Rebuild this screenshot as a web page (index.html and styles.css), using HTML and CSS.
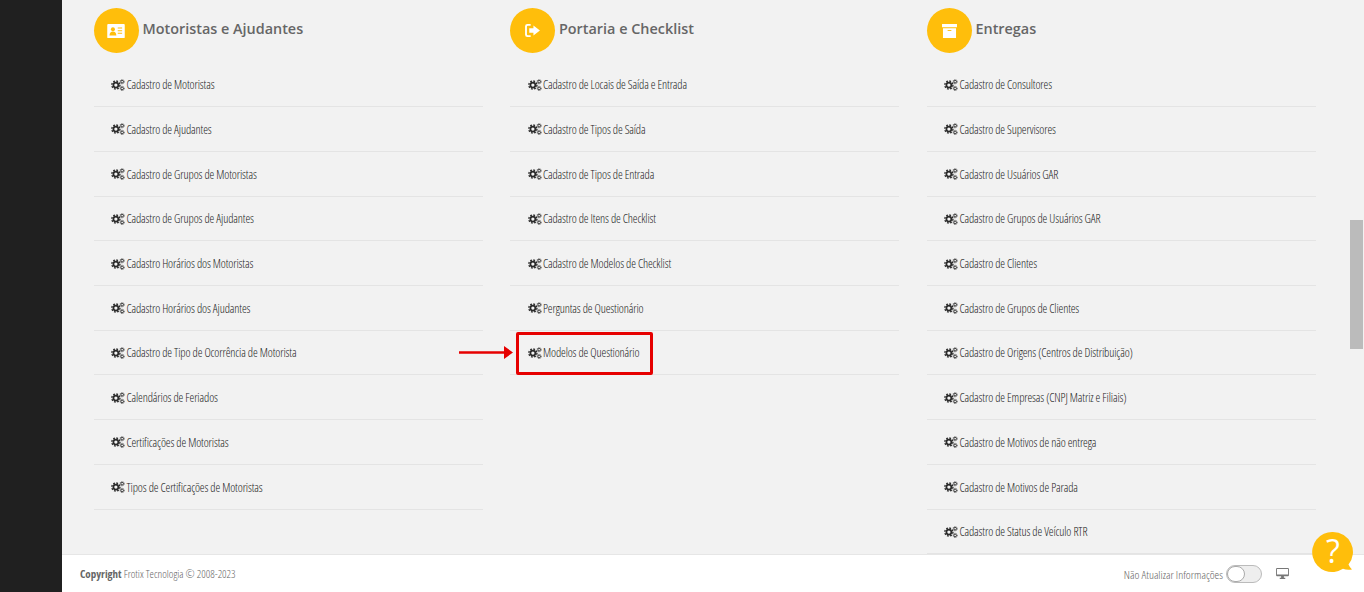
FILE: index.html
```html
<!DOCTYPE html>
<html lang="pt-BR">
<head>
<meta charset="utf-8">
<title>Frotix</title>
<link rel="stylesheet" href="styles.css">
</head>
<body>
<svg class="defs" width="0" height="0" aria-hidden="true">
  <symbol id="cogs" viewBox="0 0 15 13">
    <circle cx="5.200" cy="6.600" r="2.700" fill="none" stroke="#2a2a2a" stroke-width="1.900"/>
    <circle cx="5.200" cy="6.600" r="4.400" fill="none" stroke="#2a2a2a" stroke-width="1.500" stroke-dasharray="1.900 1.550"/>
    <circle cx="12" cy="2.900" r="1.400" fill="none" stroke="#2a2a2a" stroke-width="1"/>
    <circle cx="12" cy="2.900" r="2.300" fill="none" stroke="#2a2a2a" stroke-width=".8" stroke-dasharray="1 .8"/>
    <circle cx="12" cy="10.200" r="1.400" fill="none" stroke="#2a2a2a" stroke-width="1"/>
    <circle cx="12" cy="10.200" r="2.300" fill="none" stroke="#2a2a2a" stroke-width=".8" stroke-dasharray="1 .8"/>
  </symbol>
</svg>
<div class="app">
  <aside class="sidebar"></aside>
  <div class="main">
    <main class="content">
      <section class="col">
        <header class="head">
          <span class="badge">
            <svg width="18" height="14" viewBox="0 0 20 16"><path fill="#fff" d="M1 0h18a1 1 0 0 1 1 1v14a1 1 0 0 1-1 1H1a1 1 0 0 1-1-1V1a1 1 0 0 1 1-1z"/><circle cx="6.500" cy="6" r="2.300" fill="#ffbe0b"/><path fill="#ffbe0b" d="M2.600 13c0-3 1.600-4.400 3.900-4.400s3.900 1.400 3.900 4.400zM12 4h5v1.200h-5zM12 7h5v1.200h-5zM12 10h5v1.200h-5z"/></svg>
          </span>
          <h2 class="title">Motoristas e Ajudantes</h2>
        </header>
        <ul class="list">
          <li class="row"><svg class="cog"><use href="#cogs"/></svg><span class="label">Cadastro de Motoristas</span></li>
          <li class="row"><svg class="cog"><use href="#cogs"/></svg><span class="label">Cadastro de Ajudantes</span></li>
          <li class="row"><svg class="cog"><use href="#cogs"/></svg><span class="label">Cadastro de Grupos de Motoristas</span></li>
          <li class="row"><svg class="cog"><use href="#cogs"/></svg><span class="label">Cadastro de Grupos de Ajudantes</span></li>
          <li class="row"><svg class="cog"><use href="#cogs"/></svg><span class="label">Cadastro Horários dos Motoristas</span></li>
          <li class="row"><svg class="cog"><use href="#cogs"/></svg><span class="label">Cadastro Horários dos Ajudantes</span></li>
          <li class="row"><svg class="cog"><use href="#cogs"/></svg><span class="label">Cadastro de Tipo de Ocorrência de Motorista</span></li>
          <li class="row"><svg class="cog"><use href="#cogs"/></svg><span class="label">Calendários de Feriados</span></li>
          <li class="row"><svg class="cog"><use href="#cogs"/></svg><span class="label">Certificações de Motoristas</span></li>
          <li class="row"><svg class="cog"><use href="#cogs"/></svg><span class="label">Tipos de Certificações de Motoristas</span></li>
        </ul>
      </section>
      <section class="col">
        <header class="head">
          <span class="badge">
            <svg width="15" height="13" viewBox="0 0 16 14"><path fill="#fff" d="M2.500 0H6v2H3a1 1 0 0 0-1 1v8a1 1 0 0 0 1 1h3v2H2.500A2.500 2.500 0 0 1 0 11.500v-9A2.500 2.500 0 0 1 2.500 0zM9 1.500 16 7l-7 5.500V9.500H4.500v-5H9z"/></svg>
          </span>
          <h2 class="title">Portaria e Checklist</h2>
        </header>
        <ul class="list">
          <li class="row"><svg class="cog"><use href="#cogs"/></svg><span class="label">Cadastro de Locais de Saída e Entrada</span></li>
          <li class="row"><svg class="cog"><use href="#cogs"/></svg><span class="label">Cadastro de Tipos de Saída</span></li>
          <li class="row"><svg class="cog"><use href="#cogs"/></svg><span class="label">Cadastro de Tipos de Entrada</span></li>
          <li class="row"><svg class="cog"><use href="#cogs"/></svg><span class="label">Cadastro de Itens de Checklist</span></li>
          <li class="row"><svg class="cog"><use href="#cogs"/></svg><span class="label">Cadastro de Modelos de Checklist</span></li>
          <li class="row"><svg class="cog"><use href="#cogs"/></svg><span class="label">Perguntas de Questionário</span></li>
          <li class="row marked">
            <svg class="cog"><use href="#cogs"/></svg><span class="label">Modelos de Questionário</span>
            <span class="callout"></span>
            <svg class="arrow" width="54" height="13" viewBox="0 0 54 13"><path fill="#e60000" d="M0 5.200h45V0l9 6.500-9 6.500V7.800H0z"/></svg>
          </li>
        </ul>
      </section>
      <section class="col">
        <header class="head">
          <span class="badge">
            <svg width="15" height="14" viewBox="0 0 16 15"><path fill="#fff" d="M0 0h16v3.500H0zM1 4.500h14V15H1z"/><path fill="#ffbe0b" d="M6 6.500h4v1H6z"/></svg>
          </span>
          <h2 class="title">Entregas</h2>
        </header>
        <ul class="list">
          <li class="row"><svg class="cog"><use href="#cogs"/></svg><span class="label">Cadastro de Consultores</span></li>
          <li class="row"><svg class="cog"><use href="#cogs"/></svg><span class="label">Cadastro de Supervisores</span></li>
          <li class="row"><svg class="cog"><use href="#cogs"/></svg><span class="label">Cadastro de Usuários GAR</span></li>
          <li class="row"><svg class="cog"><use href="#cogs"/></svg><span class="label">Cadastro de Grupos de Usuários GAR</span></li>
          <li class="row"><svg class="cog"><use href="#cogs"/></svg><span class="label">Cadastro de Clientes</span></li>
          <li class="row"><svg class="cog"><use href="#cogs"/></svg><span class="label">Cadastro de Grupos de Clientes</span></li>
          <li class="row"><svg class="cog"><use href="#cogs"/></svg><span class="label">Cadastro de Origens (Centros de Distribuição)</span></li>
          <li class="row"><svg class="cog"><use href="#cogs"/></svg><span class="label">Cadastro de Empresas (CNPJ Matriz e Filiais)</span></li>
          <li class="row"><svg class="cog"><use href="#cogs"/></svg><span class="label">Cadastro de Motivos de não entrega</span></li>
          <li class="row"><svg class="cog"><use href="#cogs"/></svg><span class="label">Cadastro de Motivos de Parada</span></li>
          <li class="row"><svg class="cog"><use href="#cogs"/></svg><span class="label">Cadastro de Status de Veículo RTR</span></li>
        </ul>
      </section>
      <span class="thumb"></span>
    </main>
    <footer class="footer">
      <p class="copy"><b>Copyright</b> Frotix Tecnologia © 2008-2023</p>
      <div class="tools">
        <span class="tool-label">Não Atualizar Informações</span>
        <span class="toggle"><span class="knob"></span></span>
        <svg class="monitor" width="13" height="11" viewBox="0 0 14 12"><path fill="#777" d="M1 0h12a1 1 0 0 1 1 1v7a1 1 0 0 1-1 1H8.500v1.500H10V12H4v-1.500h1.500V9H1a1 1 0 0 1-1-1V1a1 1 0 0 1 1-1zm0 1v6h12V1z"/></svg>
      </div>
    </footer>
  </div>
</div>
<svg class="help" width="44" height="44" viewBox="0 0 44 44">
  <path fill="#ffbe0b" d="M21 1a20 20 0 0 1 15.500 32.600Q38 37 40 38.500q-5 1-9 -.7A20 20 0 1 1 21 1z"/>
  <text x="21" y="32" text-anchor="middle" class="help-mark">?</text>
</svg>
</body>
</html>
```
FILE: styles.css
```css
* { box-sizing: border-box; }
html, body { margin: 0; height: 100%; overflow: hidden; }
body { font-family: "Open Sans", "Liberation Sans", sans-serif; background: #fff; }
.defs { position: absolute; }
.app { display: flex; height: 592px; }
.sidebar { width: 62px; flex: none; background: #202020; }
.main { flex: 1; display: flex; flex-direction: column; min-width: 0; }
.content {
  position: relative;
  flex: none;
  height: 554px;
  overflow: hidden;
  background: #f2f2f2;
  padding: 8px 0 0 31.500px;
  display: grid;
  grid-template-columns: repeat(3, 389px);
  column-gap: 27.510px;
  align-items: start;
}
.head { display: flex; align-items: flex-start; height: 54.310px; }
.badge {
  width: 45px; height: 45px; border-radius: 50%;
  background: #ffbe0b;
  display: flex; align-items: center; justify-content: center;
  flex: none;
}
.title {
  margin: 10px 0 0 3.980px;
  font-size: 14.400px; line-height: 22px; font-weight: 600; color: #666;
}
.list { list-style: none; margin: 0; padding: 0; }
.row {
  position: relative;
  height: 44.740px;
  border-bottom: 1px solid #e4e4e4;
  display: flex; align-items: center;
  padding: .8px 0 0 17.980px;
}
.cog { width: 14px; height: 12px; flex: none; margin-right: 1px; }
.label {
  font-size: 12px; font-weight: 300; color: #222; white-space: nowrap;
  font-stretch: 75%;
  letter-spacing: -.12px;
}
.callout {
  position: absolute; left: 6px; top: 1.500px;
  width: 137px; height: 42.500px;
  border: 3px solid #e60000; border-radius: 2px;
}
.arrow { position: absolute; left: -51px; top: 15.500px; }
.thumb {
  position: absolute; left: 1288px; top: 220px;
  width: 13px; height: 129px; background: #bbb;
}
.footer {
  flex: 1;
  background: #fff;
  border-top: 1px solid #e6e6e6;
  display: flex; align-items: center; justify-content: space-between;
  padding: 0 75px 0 18px;
  color: #666; font-size: 11px; font-weight: 300; font-stretch: 75%;
}
.copy { margin: 0; }
.copy b { font-weight: 700; }
.tools { display: flex; align-items: center; }
.tool-label { font-size: 11.700px; }
.toggle {
  width: 36px; height: 18px; margin: 0 14px 0 3px;
  border: 1px solid #bbb; border-radius: 9px; background: #eee;
  display: block;
}
.knob {
  display: block; width: 18px; height: 16px; border-radius: 9px;
  background: #fff; border: 1px solid #aaa;
}
.help { position: absolute; left: 1312px; top: 531px; }
.help-mark { font-family: "Open Sans", sans-serif; font-size: 32px; font-weight: 500; fill: #fff; }
```
